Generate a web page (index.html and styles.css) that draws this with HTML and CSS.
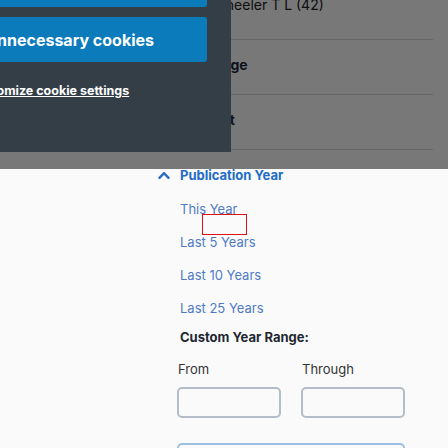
FILE: index.html
```html
<!DOCTYPE html>
<html>
<head>
<meta charset="utf-8">
<link rel="stylesheet" href="styles.css">
</head>
<body>
<div class="sidebar">
  <div class="section first">
    <div class="facet-item">Wheeler T L (42)</div>
  </div>
  <div class="section">
    <div class="facet-title">Language</div>
  </div>
  <div class="section">
    <div class="facet-title">Content</div>
  </div>
  <div class="section open">
    <div class="facet-head">
      <svg class="chev" width="12" height="8" viewBox="0 0 12 8"><path d="M1.5 6.8 L6 2.2 L10.5 6.8" fill="none" stroke="#2a6fc4" stroke-width="2.4" stroke-linecap="round" stroke-linejoin="round"/></svg>
      <span class="facet-head-title">Publication Year</span>
    </div>
    <div class="links">
      <a class="year-link">This Year</a>
      <a class="year-link">Last 5 Years</a>
      <a class="year-link">Last 10 Years</a>
      <a class="year-link">Last 25 Years</a>
    </div>
    <div class="custom-title">Custom Year Range:</div>
    <div class="range-labels">
      <span class="lbl">From</span>
      <span class="lbl">Through</span>
    </div>
    <div class="range-inputs">
      <input class="year-input" type="text">
      <input class="year-input" type="text">
    </div>
    <div class="apply-box"></div>
  </div>
</div>

<div class="highlight"></div>

<div class="overlay"></div>
<div class="cookie-dialog">
  <button class="cookie-btn"><span>Accept all cookies</span></button>
  <button class="cookie-btn"><span>Reject unnecessary cookies</span></button>
  <a class="cookie-link">Customize cookie settings</a>
</div>
</body>
</html>
```

FILE: styles.css
```css
* { box-sizing: border-box; }
html, body { margin: 0; padding: 0; }
body {
  background: #fafafa;
  font-family: Inter, "Noto Sans", sans-serif;
  width: 448px;
  height: 448px;
  overflow: hidden;
  position: relative;
}
.sidebar {
  margin-left: 150px;
  width: 283px;
}
.section {
  border-bottom: 1px solid #d6d6d6;
  height: 55px;
  padding-top: 16px;
  padding-left: 30px;
}
.section.first {
  padding-top: 0;
  margin-top: -4px;
  height: 44px;
  padding-left: 62px;
}
.section.open {
  border-bottom: none;
  height: auto;
  padding-left: 0;
}
.facet-item {
  font-size: 14px;
  line-height: 18px;
  color: #222;
}
.facet-title {
  font-size: 14px;
  line-height: 18px;
  font-weight: 700;
  color: #1c2a3a;
}
.facet-head {
  display: flex;
  align-items: center;
  height: 18px;
  padding-left: 8px;
  gap: 10px;
}
.chev { display: block; }
.facet-head-title {
  font-size: 13px;
  font-weight: 700;
  color: #226cc6;
  line-height: 18px;
}
.links {
  display: flex;
  flex-direction: column;
  padding-left: 30px;
  margin-top: 16px;
  gap: 15px;
}
.year-link {
  font-size: 13px;
  line-height: 18px;
  color: #4f7bc6;
}
.custom-title {
  margin-top: 11px;
  padding-left: 30px;
  font-size: 13px;
  line-height: 18px;
  font-weight: 700;
  color: #222831;
}
.range-labels {
  margin-top: 14px;
  padding-left: 28px;
  display: flex;
}
.lbl {
  width: 124px;
  font-size: 13px;
  line-height: 18px;
  color: #333;
}
.range-inputs {
  margin-top: 9px;
  padding-left: 27px;
  display: flex;
  gap: 20px;
}
.year-input {
  width: 104px;
  height: 31px;
  border: 2px solid #b3bcc7;
  border-radius: 5px;
  background: #fafafa;
  margin: 0;
  padding: 0;
}
.apply-box {
  margin-top: 25px;
  margin-left: 27px;
  width: 228px;
  height: 31px;
  border: 2px solid #9cc0e2;
  border-radius: 5px;
}
.highlight {
  position: absolute;
  left: 202px;
  top: 214px;
  width: 45px;
  height: 21px;
  border: 1px solid #e01010;
}
.overlay {
  position: fixed;
  left: 0;
  top: 0;
  width: 448px;
  height: 169px;
  background: rgba(0, 0, 0, 0.52);
}
.cookie-dialog {
  position: fixed;
  left: -62px;
  top: -48px;
  width: 293px;
  height: 200px;
  background: #343e47;
  padding: 10px 24px 0 24px;
  display: flex;
  flex-direction: column;
  gap: 10px;
}
.cookie-btn {
  display: flex;
  align-items: center;
  justify-content: flex-end;
  width: 245px;
  height: 45px;
  border: none;
  border-radius: 3px;
  background: #0b7bbb;
  color: #fff;
  font-family: Inter, "Noto Sans", sans-serif;
  font-size: 16px;
  font-weight: 700;
  padding: 0 53px 0 0;
  white-space: nowrap;
  overflow: hidden;
}
.cookie-btn span { flex: none; }
.cookie-link {
  margin-top: 10px;
  margin-left: 6px;
  font-size: 12.5px;
  line-height: 18px;
  font-weight: 700;
  color: #fff;
  text-decoration: underline;
}
```
